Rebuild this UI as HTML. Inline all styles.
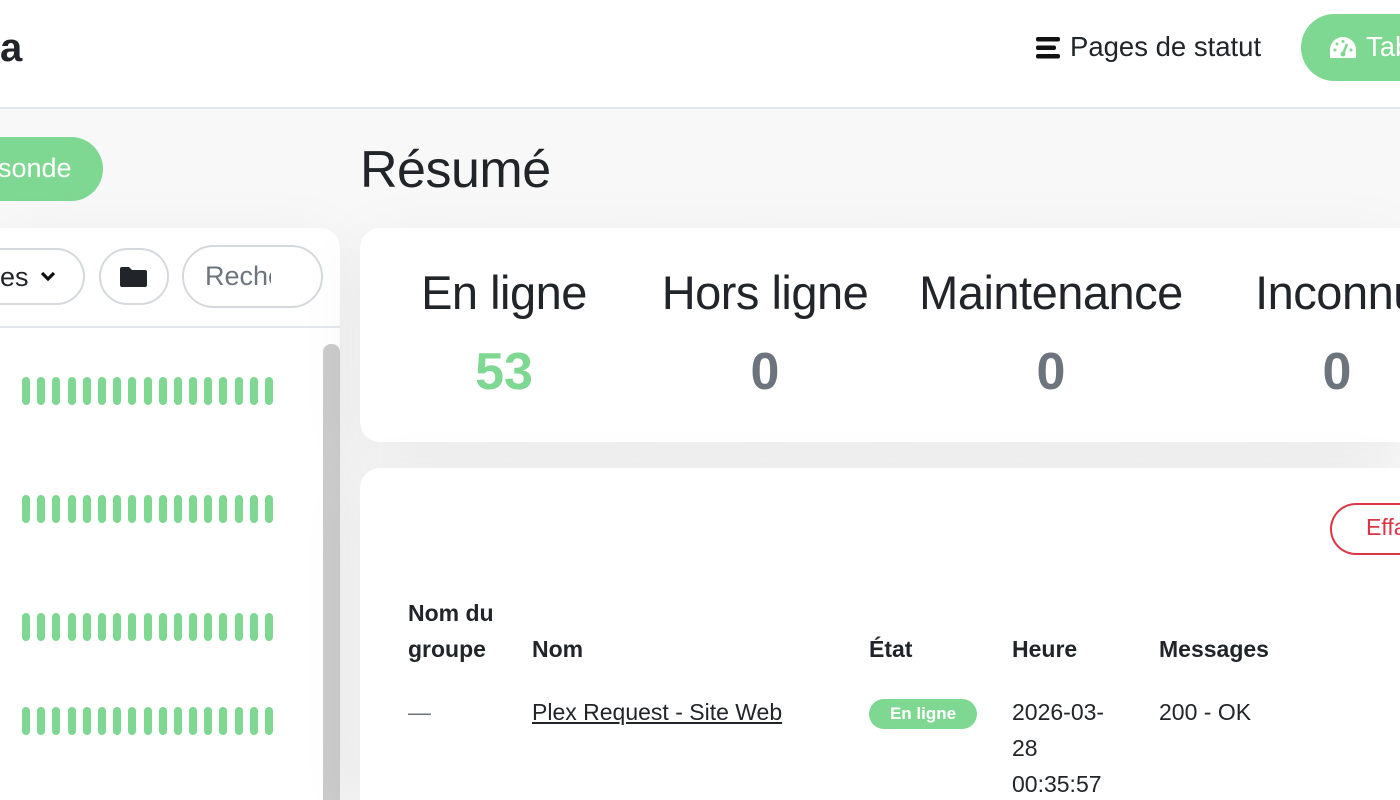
<!DOCTYPE html>
<html><head><meta charset="utf-8"><style>
*{box-sizing:border-box;margin:0;padding:0}
html{width:1400px;height:800px;overflow:hidden}
body{width:1400px;height:800px;overflow:hidden;background:#f8f8f9;font-family:"Liberation Sans",sans-serif;color:#212529;position:relative}
.hdr{position:absolute;left:0;top:0;width:1400px;height:109px;background:#fff;border-bottom:2px solid #e4e7ec}
.abs{position:absolute}
.card{position:absolute;background:#fff;border-radius:20px;box-shadow:0 15px 70px rgba(0,0,0,.06)}
.bars{position:absolute;left:22px;display:flex;gap:7.2px}
.bars i{display:block;width:8px;height:28px;border-radius:4px;background:#7ed891}
.pill{position:absolute;border:2px solid #d5d9de;border-radius:32px;background:#fff}
.stat{position:absolute;text-align:center;width:340px}
.stat h3{font-size:47px;font-weight:500;line-height:50px;letter-spacing:-0.5px}
.stat b{display:block;font-size:52px;margin-top:24px;color:#6c757d}
.t{position:absolute;font-size:23px;line-height:36px}
.th{font-weight:bold}
</style></head><body>
<div class="hdr">
 <div class="abs" style="left:0;top:26px;font-size:40px;font-weight:bold">a</div>
 <svg class="abs" style="left:1035px;top:36px" width="26" height="24" viewBox="0 0 26 24"><rect x="1" y="1" width="24" height="4.5" rx="2" fill="#111"/><rect x="1" y="9.5" width="20" height="4.5" rx="2" fill="#111"/><rect x="1" y="18" width="24" height="4.5" rx="2" fill="#111"/></svg>
 <div class="abs" style="left:1070px;top:31px;font-size:27.5px">Pages de statut</div>
 <div class="abs" style="left:1301px;top:14px;width:99px;height:67px;border-radius:34px 0 0 34px;background:#7ed891"></div>
 <svg class="abs" style="left:1328px;top:35px" width="30" height="26" viewBox="0 0 30 26"><path d="M15 2A13 13 0 0 0 2 15v8h26v-8A13 13 0 0 0 15 2z" fill="#fff"/><circle cx="15" cy="19" r="2.5" fill="#7ed891"/><path d="M15 19l4-10" stroke="#7ed891" stroke-width="2.5"/><circle cx="7" cy="15" r="1.5" fill="#7ed891"/><circle cx="9" cy="9" r="1.5" fill="#7ed891"/><circle cx="15" cy="6.5" r="1.5" fill="#7ed891"/><circle cx="23" cy="15" r="1.5" fill="#7ed891"/></svg>
 <div class="abs" style="left:1366px;top:31px;font-size:27.5px;color:#fff;width:34px;overflow:hidden;white-space:nowrap">Tableau</div>
</div>
<div class="abs" style="left:0;top:137px;width:103px;height:64px;border-radius:0 32px 32px 0;background:#7ed891"></div>
<div class="abs" style="left:-2px;top:153px;font-size:27px;color:#fff">sonde</div>
<div class="card" style="left:0;top:228px;width:340px;height:572px;border-radius:0 20px 0 0"></div>
<div class="pill" style="left:0;top:248px;width:85px;height:57px;border-left:none;border-radius:0 30px 30px 0"></div>
<div class="abs" style="left:0;top:262px;font-size:27px">es</div>
<svg class="abs" style="left:40px;top:270px" width="16" height="12" viewBox="0 0 16 12"><path d="M2 3l6 6 6-6" stroke="#111" stroke-width="3.2" fill="none"/></svg>
<div class="pill" style="left:99px;top:248px;width:70px;height:57px"></div>
<svg class="abs" style="left:120px;top:267px" width="27" height="20" viewBox="0 0 27 20"><path d="M0 2a2 2 0 0 1 2-2h7l3 3h13a2 2 0 0 1 2 2v13a2 2 0 0 1-2 2H2a2 2 0 0 1-2-2z" fill="#212529"/></svg>
<div class="pill" style="left:182px;top:245px;width:141px;height:63px"></div>
<div class="abs" style="left:205px;top:261px;font-size:27px;color:#6c757d;width:66px;overflow:hidden;white-space:nowrap">Recherche</div>
<div class="abs" style="left:0;top:326px;width:340px;height:2px;background:#e4e7ec"></div>
<div class="abs" style="left:323px;top:344px;width:17px;height:456px;border-radius:8px 8px 0 0;background:#cbcbcb"></div>
<div class="bars" style="top:377px"><i></i><i></i><i></i><i></i><i></i><i></i><i></i><i></i><i></i><i></i><i></i><i></i><i></i><i></i><i></i><i></i><i></i></div>
<div class="bars" style="top:495px"><i></i><i></i><i></i><i></i><i></i><i></i><i></i><i></i><i></i><i></i><i></i><i></i><i></i><i></i><i></i><i></i><i></i></div>
<div class="bars" style="top:613px"><i></i><i></i><i></i><i></i><i></i><i></i><i></i><i></i><i></i><i></i><i></i><i></i><i></i><i></i><i></i><i></i><i></i></div>
<div class="bars" style="top:707px"><i></i><i></i><i></i><i></i><i></i><i></i><i></i><i></i><i></i><i></i><i></i><i></i><i></i><i></i><i></i><i></i><i></i></div>
<div class="abs" style="left:360px;top:140px;font-size:52px;font-weight:500;letter-spacing:-0.5px">Résumé</div>
<div class="card" style="left:360px;top:228px;width:1040px;height:214px;border-radius:20px 0 0 20px"></div>
<div class="stat" style="left:334px;top:268px"><h3>En ligne</h3><b style="color:#7ed891">53</b></div>
<div class="stat" style="left:595px;top:268px"><h3>Hors ligne</h3><b>0</b></div>
<div class="stat" style="left:881px;top:268px"><h3>Maintenance</h3><b>0</b></div>
<div class="abs" style="left:1167px;top:268px;width:233px;height:150px;overflow:hidden"><div class="stat" style="left:0;top:0"><h3>Inconnu</h3><b>0</b></div></div>
<div class="card" style="left:360px;top:468px;width:1040px;height:332px;border-radius:20px 0 0 0"></div>
<div class="abs" style="left:1330px;top:503px;width:70px;height:52px;border:2px solid #dc3545;border-right:none;border-radius:26px 0 0 26px"></div>
<div class="abs" style="left:1366px;top:514px;font-size:23px;color:#dc3545;width:34px;overflow:hidden;white-space:nowrap">Effacer</div>
<div class="t th" style="left:408px;top:595px">Nom du<br>groupe</div>
<div class="t th" style="left:532px;top:631px">Nom</div>
<div class="t th" style="left:869px;top:631px">État</div>
<div class="t th" style="left:1012px;top:631px">Heure</div>
<div class="t th" style="left:1159px;top:631px">Messages</div>
<div class="t" style="left:408px;top:694px;color:#6c757d">—</div>
<div class="t" style="left:532px;top:694px;text-decoration:underline">Plex Request - Site Web</div>
<div class="abs" style="left:869px;top:699px;width:108px;height:30px;border-radius:15px;background:#7ed891;color:#fff;font-weight:bold;font-size:17px;text-align:center;line-height:30px">En ligne</div>
<div class="abs" style="left:1012px;top:694px;width:120px;height:106px;overflow:hidden;font-size:23px;line-height:36px">2026-03-<br>28<br>00:35:57</div>
<div class="t" style="left:1159px;top:694px">200 - OK</div>
</body></html>
